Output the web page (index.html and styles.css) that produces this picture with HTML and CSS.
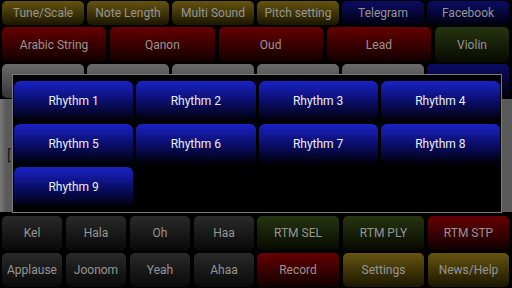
FILE: index.html
```html
<!doctype html>
<html lang="en">
  <head>
    <meta charset="utf-8">
    <title>Arabic Instrument</title>
    <link rel="stylesheet" href="styles.css">
  </head>
  <body>
    <div class="app">
      <div class="row row-top">
        <div class="btn olive">Tune/Scale</div>
        <div class="btn olive">Note Length</div>
        <div class="btn olive">Multi Sound</div>
        <div class="btn olive">Pitch setting</div>
        <div class="btn navy">Telegram</div>
        <div class="btn navy">Facebook</div>
      </div>
      <div class="row row-sounds">
        <div class="btn red">Arabic String</div>
        <div class="btn red">Qanon</div>
        <div class="btn red">Oud</div>
        <div class="btn red">Lead</div>
        <div class="btn green">Violin</div>
      </div>
      <div class="row row-grey">
        <div class="btn grey"></div>
        <div class="btn grey"></div>
        <div class="btn grey"></div>
        <div class="btn grey"></div>
        <div class="btn grey"></div>
        <div class="btn navy"></div>
      </div>
      <div class="panel"><span class="bracket">[</span></div>
      <div class="row row-bottom">
        <div class="btn dark">Kel</div>
        <div class="btn dark">Hala</div>
        <div class="btn dark">Oh</div>
        <div class="btn dark">Haa</div>
        <div class="btn green">RTM SEL</div>
        <div class="btn green">RTM PLY</div>
        <div class="btn red">RTM STP</div>
      </div>
      <div class="row row-bottom">
        <div class="btn dark">Applause</div>
        <div class="btn dark">Joonom</div>
        <div class="btn dark">Yeah</div>
        <div class="btn dark">Ahaa</div>
        <div class="btn red">Record</div>
        <div class="btn olive">Settings</div>
        <div class="btn olive">News/Help</div>
      </div>
    </div>

    <div class="dialog">
      <div class="rhythm">Rhythm 1</div>
      <div class="rhythm">Rhythm 2</div>
      <div class="rhythm">Rhythm 3</div>
      <div class="rhythm">Rhythm 4</div>
      <div class="rhythm">Rhythm 5</div>
      <div class="rhythm">Rhythm 6</div>
      <div class="rhythm">Rhythm 7</div>
      <div class="rhythm">Rhythm 8</div>
      <div class="rhythm">Rhythm 9</div>
    </div>
  </body>
</html>
```

FILE: styles.css
```css
html, body { margin: 0; padding: 0; background: #000; font-family: Roboto, "Liberation Sans", sans-serif; font-size: 12px; }
.app { width: 512px; height: 288px; padding: 1px 3px 0 2px; box-sizing: border-box; display: flex; flex-direction: column; overflow: hidden; }
.row { display: grid; gap: 3px; }
.row-top { grid-template-columns: repeat(6, 1fr); height: 24px; }
.row-sounds { grid-template-columns: repeat(4, 1fr) 74px; column-gap: 4px; height: 35px; margin-top: 2px; }
.row-grey { grid-template-columns: repeat(6, 1fr); height: 34px; margin-top: 2px; }
.row-bottom { grid-template-columns: repeat(4, 60px) repeat(3, 1fr); column-gap: 4px; height: 34px; margin-top: 3px; }
.row-bottom .btn:nth-child(5) { margin-left: -1px; }
.panel { height: 113px; margin: 1px -3px 1px -2px; background: linear-gradient(to right, #7a7a7a, #5a5a5a 6px); position: relative; }
.bracket { position: absolute; left: 7px; top: 48px; color: #111; font-size: 14px; }

.btn { border-radius: 5px; display: flex; align-items: center; justify-content: center; color: #959595; white-space: nowrap; overflow: hidden; }
.olive { background: linear-gradient(#665410, #1e1900 95%); }
.navy { background: linear-gradient(#0c0c66, #000012 95%); }
.red { background: linear-gradient(#660000, #140000 95%); }
.green { background: linear-gradient(#26340f, #080c02 95%); }
.grey { background: linear-gradient(#6a6a6a, #383838 95%); }
.dark { background: linear-gradient(#2a2a2a, #0a0a0a 95%); }

.dialog { position: absolute; left: 12px; top: 74px; width: 490px; height: 139px; box-sizing: border-box; border: 1px solid #7a7a7a; background: #000; padding: 6px 1px 0 1px; display: grid; grid-template-columns: repeat(4, 1fr); grid-auto-rows: 40px; gap: 3px; }
.rhythm { border-radius: 6px; background: linear-gradient(#1a22c6, #0a0e6c 50%, #000008); color: #ececec; display: flex; align-items: center; justify-content: center; }
```
